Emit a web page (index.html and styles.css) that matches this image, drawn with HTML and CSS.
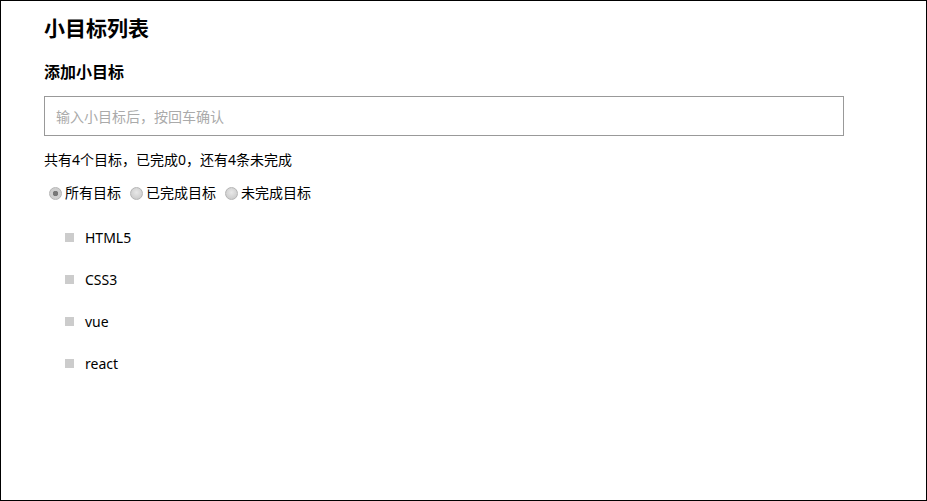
FILE: index.html
```html
<!DOCTYPE html>
<html lang="zh-CN">
<head>
    <meta charset="UTF-8">
    <meta name="viewport" content="width=device-width, initial-scale=1.0">
    <title>小目标列表</title>
    <link rel="stylesheet" href="styles.css">
</head>
<body>
    <div class="page">
        <!-- 标题 -->
        <h1 class="title">小目标列表</h1>
        <h2 class="sub-title">添加小目标</h2>

        <!-- 输入框 -->
        <input type="text" class="goal-input" placeholder="输入小目标后，按回车确认">

        <!-- 统计 -->
        <p class="summary">共有4个目标，已完成0，还有4条未完成</p>

        <!-- 筛选 -->
        <div class="filters">
            <label class="filter"><input type="radio" name="show" checked>所有目标</label>
            <label class="filter"><input type="radio" name="show">已完成目标</label>
            <label class="filter"><input type="radio" name="show">未完成目标</label>
        </div>

        <!-- 列表 -->
        <ul class="goal-list">
            <li class="goal">HTML5</li>
            <li class="goal">CSS3</li>
            <li class="goal">vue</li>
            <li class="goal">react</li>
        </ul>
    </div>
</body>
</html>
```

FILE: styles.css
```css
html, body {
    margin: 0;
    height: 100%;
}
body {
    font-family: "Noto Sans", "Noto Sans CJK SC", sans-serif;
    color: #000;
    background-color: #fff;
}
.page {
    box-sizing: border-box;
    height: 100%;
    border: 1px solid #000;
    padding: 11px 0 0 43px;
}
.title {
    margin: 0;
    font-size: 21px;
    line-height: 32px;
    font-weight: bold;
}
.sub-title {
    margin: 16px 0 0;
    font-size: 16px;
    line-height: 24px;
    font-weight: bold;
}
.goal-input {
    display: block;
    box-sizing: border-box;
    width: 800px;
    height: 40px;
    margin-top: 12px;
    padding: 0 11px;
    border: 1px solid #999;
    font-family: inherit;
    font-size: 14px;
    outline: none;
}
.goal-input::placeholder {
    color: #aaa;
}
.summary {
    margin: 14px 0 0;
    font-size: 14px;
    line-height: 20px;
}
.filters {
    display: flex;
    margin-top: 13px;
    font-size: 14px;
    line-height: 20px;
}
.filter {
    display: flex;
    align-items: center;
    margin-right: 4px;
}
.filter input {
    appearance: none;
    box-sizing: border-box;
    width: 13px;
    height: 13px;
    margin: 0 3px 0 5px;
    border-radius: 50%;
    border: 1px solid #b5b5b5;
    background: radial-gradient(circle at 50% 40%, #e8e8e8, #c4c4c4);
}
.filter input:checked {
    background: radial-gradient(circle, #777 0 2.5px, #cfcfcf 3px);
}
.goal-list {
    list-style: none;
    margin: 13px 0 0;
    padding: 0 0 0 21px;
}
.goal {
    display: flex;
    align-items: center;
    height: 42px;
    font-size: 14px;
}
.goal::before {
    content: "";
    width: 9px;
    height: 9px;
    margin-right: 11px;
    background-color: #ccc;
}
```
